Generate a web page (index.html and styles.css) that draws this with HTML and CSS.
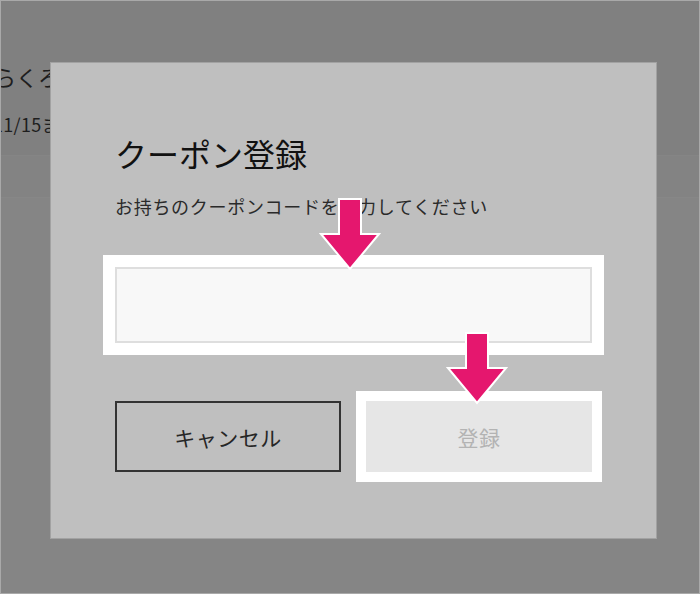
FILE: index.html
```html
<!DOCTYPE html>
<html lang="ja">
<head>
<meta charset="utf-8">
<link rel="stylesheet" href="styles.css">
</head>
<body>
<div class="page">
  <div class="under">
    <div class="under-title">もらくろ</div>
    <div class="under-date">11/15まで</div>
    <div class="under-band"></div>
    <div class="under-rest"></div>
  </div>

  <div class="modal">
    <h2 class="modal-title">クーポン登録</h2>
    <p class="modal-lead">お持ちのクーポンコードを入力してください</p>
    <input class="coupon-input" type="text" aria-label="クーポンコード">
    <div class="actions">
      <button class="btn btn-cancel">キャンセル</button>
      <button class="btn btn-submit">登録</button>
    </div>

    <svg class="arrow arrow-input" width="62" height="76" viewBox="0 0 62 76">
      <polygon points="20,1 42,1 42,36 60,36 31,71 2,36 20,36" fill="#e5176e" stroke="#fff" stroke-width="2" stroke-linejoin="miter"/>
    </svg>
    <svg class="arrow arrow-submit" width="62" height="76" viewBox="0 0 62 76">
      <polygon points="20,1 42,1 42,36 60,36 31,71 2,36 20,36" fill="#e5176e" stroke="#fff" stroke-width="2" stroke-linejoin="miter"/>
    </svg>
  </div>
</div>
</body>
</html>
```

FILE: styles.css
```css
* { box-sizing: border-box; }

html, body {
  margin: 0;
  padding: 0;
}

body {
  font-family: "Noto Sans CJK JP", "Noto Sans", sans-serif;
  background: #808080;
}

.page {
  position: relative;
  width: 700px;
  height: 594px;
  overflow: hidden;
  border: 1px solid #a9a9a9;
  background: #808080;
}

.under {
  display: flex;
  flex-direction: column;
  height: 100%;
  padding-top: 60px;
  color: #1e1e1e;
}

.under-title {
  font-size: 22px;
  line-height: 30px;
  margin-left: -29px;
}

.under-date {
  font-size: 18px;
  line-height: 26px;
  margin-top: 20px;
  margin-left: -8px;
  letter-spacing: 0.3px;
}

.under-band {
  margin-top: 18px;
  height: 42px;
  background: #838383;
  border-top: 1px solid #858585;
}

.under-rest {
  flex: 1;
  background: #858585;
  border-top: 1px solid #878787;
}

.modal {
  position: absolute;
  left: 49px;
  top: 61px;
  width: 607px;
  height: 477px;
  background: #bfbfbf;
  border: 1px solid #a2a2a2;
  padding: 70px 64px 0;
  display: flex;
  flex-direction: column;
}

.modal-title {
  margin: 0;
  font-size: 32px;
  line-height: 40px;
  font-weight: normal;
  color: #111;
}

.modal-lead {
  margin: 21px 0 0;
  font-size: 18px;
  line-height: 24px;
  letter-spacing: 0.7px;
  color: #2a2a2a;
}

.coupon-input {
  margin-top: 49px;
  width: 100%;
  height: 76px;
  background: #f8f8f8;
  border: 2px solid #dedede;
  border-radius: 0;
  outline: 12px solid #fff;
  font: inherit;
}

.actions {
  margin-top: 58px;
  display: grid;
  grid-template-columns: 1fr 1fr;
  gap: 25px;
}

.btn {
  height: 71px;
  font-family: inherit;
  font-size: 21px;
  letter-spacing: 0.5px;
  padding: 0;
}

.btn-cancel {
  background: transparent;
  border: 2px solid #333;
  color: #262626;
}

.btn-submit {
  background: #e6e6e6;
  border: none;
  color: #b3b3b3;
  outline: 10px solid #fff;
}

.arrow {
  position: absolute;
  display: block;
}

.arrow-input {
  left: 268px;
  top: 135px;
}

.arrow-submit {
  left: 395px;
  top: 269px;
}
```
